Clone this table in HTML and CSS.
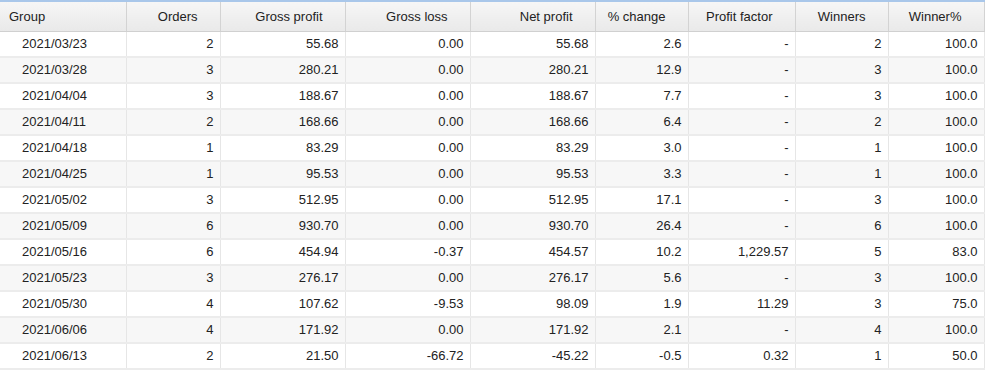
FILE: index.html
```html
<!DOCTYPE html>
<html>
<head>
<meta charset="utf-8">
<link rel="stylesheet" href="styles.css">
</head>
<body>
<div class="grid">
<table class="tbl">
<colgroup>
<col class="c1"><col class="c2"><col class="c3"><col class="c4"><col class="c5"><col class="c6"><col class="c7"><col class="c8"><col class="c9">
</colgroup>
<thead>
<tr>
<th class="h-left">Group</th><th>Orders</th><th>Gross profit</th><th>Gross loss</th><th>Net profit</th><th>% change</th><th>Profit factor</th><th>Winners</th><th>Winner%</th>
</tr>
</thead>
<tbody>
<tr><td class="grp">2021/03/23</td><td>2</td><td>55.68</td><td>0.00</td><td>55.68</td><td>2.6</td><td>-</td><td>2</td><td>100.0</td></tr>
<tr><td class="grp">2021/03/28</td><td>3</td><td>280.21</td><td>0.00</td><td>280.21</td><td>12.9</td><td>-</td><td>3</td><td>100.0</td></tr>
<tr><td class="grp">2021/04/04</td><td>3</td><td>188.67</td><td>0.00</td><td>188.67</td><td>7.7</td><td>-</td><td>3</td><td>100.0</td></tr>
<tr><td class="grp">2021/04/11</td><td>2</td><td>168.66</td><td>0.00</td><td>168.66</td><td>6.4</td><td>-</td><td>2</td><td>100.0</td></tr>
<tr><td class="grp">2021/04/18</td><td>1</td><td>83.29</td><td>0.00</td><td>83.29</td><td>3.0</td><td>-</td><td>1</td><td>100.0</td></tr>
<tr><td class="grp">2021/04/25</td><td>1</td><td>95.53</td><td>0.00</td><td>95.53</td><td>3.3</td><td>-</td><td>1</td><td>100.0</td></tr>
<tr><td class="grp">2021/05/02</td><td>3</td><td>512.95</td><td>0.00</td><td>512.95</td><td>17.1</td><td>-</td><td>3</td><td>100.0</td></tr>
<tr><td class="grp">2021/05/09</td><td>6</td><td>930.70</td><td>0.00</td><td>930.70</td><td>26.4</td><td>-</td><td>6</td><td>100.0</td></tr>
<tr><td class="grp">2021/05/16</td><td>6</td><td>454.94</td><td>-0.37</td><td>454.57</td><td>10.2</td><td>1,229.57</td><td>5</td><td>83.0</td></tr>
<tr><td class="grp">2021/05/23</td><td>3</td><td>276.17</td><td>0.00</td><td>276.17</td><td>5.6</td><td>-</td><td>3</td><td>100.0</td></tr>
<tr><td class="grp">2021/05/30</td><td>4</td><td>107.62</td><td>-9.53</td><td>98.09</td><td>1.9</td><td>11.29</td><td>3</td><td>75.0</td></tr>
<tr><td class="grp">2021/06/06</td><td>4</td><td>171.92</td><td>0.00</td><td>171.92</td><td>2.1</td><td>-</td><td>4</td><td>100.0</td></tr>
<tr><td class="grp">2021/06/13</td><td>2</td><td>21.50</td><td>-66.72</td><td>-45.22</td><td>-0.5</td><td>0.32</td><td>1</td><td>50.0</td></tr>
</tbody>
</table>
</div>
</body>
</html>
```
FILE: styles.css
```css
html, body {
  margin: 0;
  padding: 0;
  background: #ffffff;
}
.grid {
  width: 985px;
  height: 370px;
  overflow: hidden;
  border-top: 2px solid #a9c7ea;
  box-sizing: border-box;
}
.tbl {
  border-collapse: collapse;
  table-layout: fixed;
  width: 984px;
  font-family: "Liberation Sans", Arial, sans-serif;
  font-size: 13px;
  color: #222222;
}
.c1 { width: 126px; }
.c2 { width: 94px; }
.c3 { width: 125px; }
.c4 { width: 125px; }
.c5 { width: 125px; }
.c6 { width: 93px; }
.c7 { width: 107px; }
.c8 { width: 93px; }
.c9 { width: 96px; }
.tbl th {
  height: 29px;
  padding: 0 22px 0 0;
  text-align: right;
  font-weight: normal;
  background: linear-gradient(#f6f6f6, #e9e9e9);
  border-right: 1px solid #d3d3d3;
  border-left: 1px solid #ffffff;
  border-bottom: 1px solid #d0d0d0;
  white-space: nowrap;
  box-sizing: border-box;
}
.tbl th.h-left {
  text-align: left;
  padding: 0 0 0 9px;
  border-left: none;
}
.tbl td {
  height: 24px;
  padding: 0 6px 0 0;
  text-align: right;
  border-right: 1px solid #e6e6e6;
  border-bottom: 2px solid #ececec;
  white-space: nowrap;
}
.tbl td.grp {
  text-align: left;
  padding: 0 0 0 22px;
}
.tbl tbody tr:nth-child(even) td {
  background: #f7f7f7;
}
```
